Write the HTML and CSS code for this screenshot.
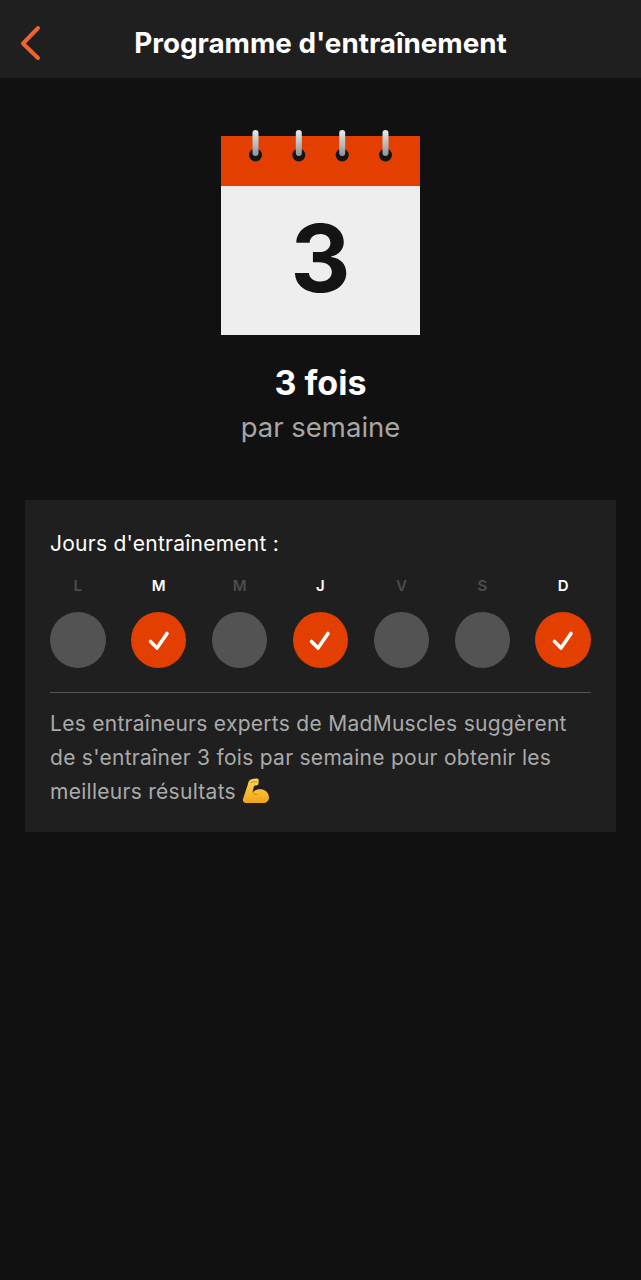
FILE: index.html
```html
<!DOCTYPE html>
<html lang="fr">
<head>
    <meta charset="UTF-8">
    <meta name="viewport" content="width=device-width, initial-scale=1.0">
    <title>Programme d'entraînement</title>
    <link rel="stylesheet" href="styles.css">
</head>
<body>
    <header class="topbar">
        <svg class="back" width="24" height="36" viewBox="0 0 24 36">
            <path d="M19 3 L4 18.5 L19 33" fill="none" stroke="#f2622e" stroke-width="4" stroke-linecap="round" stroke-linejoin="round"/>
        </svg>
        <h1>Programme d'entraînement</h1>
    </header>

    <section class="summary">
        <div class="calendar">
            <svg class="rings" width="199" height="36" viewBox="0 0 199 36">
                <defs>
                    <linearGradient id="metal" x1="0" y1="0" x2="0" y2="1">
                        <stop offset="0" stop-color="#e8ecec"/>
                        <stop offset="1" stop-color="#8f9294"/>
                    </linearGradient>
                </defs>
                <g id="ring">
                    <circle cx="34.5" cy="25" r="6.5" fill="#141414"/>
                    <rect x="31.5" y="0" width="6" height="26" rx="3" fill="url(#metal)"/>
                </g>
                <use href="#ring" x="43.3"/>
                <use href="#ring" x="86.7"/>
                <use href="#ring" x="130"/>
            </svg>
            <div class="cal-top"></div>
            <div class="cal-body">3</div>
        </div>
        <div class="times">3 fois</div>
        <div class="per-week">par semaine</div>
    </section>

    <section class="card">
        <h2>Jours d'entraînement :</h2>
        <div class="days">
            <div class="day"><span class="letter">L</span><span class="dot"></span></div>
            <div class="day on"><span class="letter">M</span><span class="dot"><svg width="24" height="24" viewBox="0 0 24 24"><path d="M3.5 13.5 L10 20 L20 5.5" fill="none" stroke="#fff" stroke-width="3.6" stroke-linecap="round" stroke-linejoin="round"/></svg></span></div>
            <div class="day"><span class="letter">M</span><span class="dot"></span></div>
            <div class="day on"><span class="letter">J</span><span class="dot"><svg width="24" height="24" viewBox="0 0 24 24"><path d="M3.5 13.5 L10 20 L20 5.5" fill="none" stroke="#fff" stroke-width="3.6" stroke-linecap="round" stroke-linejoin="round"/></svg></span></div>
            <div class="day"><span class="letter">V</span><span class="dot"></span></div>
            <div class="day"><span class="letter">S</span><span class="dot"></span></div>
            <div class="day on"><span class="letter">D</span><span class="dot"><svg width="24" height="24" viewBox="0 0 24 24"><path d="M3.5 13.5 L10 20 L20 5.5" fill="none" stroke="#fff" stroke-width="3.6" stroke-linecap="round" stroke-linejoin="round"/></svg></span></div>
        </div>
        <p class="note">Les entraîneurs experts de MadMuscles suggèrent de s'entraîner 3 fois par semaine pour obtenir les meilleurs résultats
            <svg class="muscle" width="28" height="28" viewBox="0 0 28 28">
                <defs>
                    <linearGradient id="skin" x1="0" y1="0" x2="0" y2="1">
                        <stop offset="0" stop-color="#ffd65a"/>
                        <stop offset="1" stop-color="#f2a416"/>
                    </linearGradient>
                </defs>
                <path d="M4 26 C1.5 26 0.5 24 1 22 L6 7 C6.3 4 8 2.5 10.5 2 L15 1.5 C16.5 1.5 17 3 16.5 4.5 L16.5 6.5 C16.5 8 15 8.5 13.5 8.5 L12 9 L10.5 15.5 C13 12.5 17 11.5 20.5 12.5 C24.5 13.5 27 17 27 20.5 C27 24 24.5 26 21 26 Z" fill="url(#skin)"/>
                <path d="M9 5.5 C11 4.5 13 4.5 15 5 M10.5 15.5 C12 17 13.5 17.5 15 17.5" fill="none" stroke="#c98a10" stroke-width="1" stroke-linecap="round"/>
            </svg>
        </p>
    </section>
</body>
</html>
```

FILE: styles.css
```css
body {
    margin: 0;
    min-height: 1280px;
    background-color: #111111;
    font-family: Inter, "Liberation Sans", sans-serif;
    color: #fff;
}
.topbar {
    position: relative;
    height: 78px;
    box-sizing: border-box;
    padding-top: 9px;
    display: flex;
    align-items: center;
    justify-content: center;
    background-color: #1f1f1f;
}
.back {
    position: absolute;
    left: 19px;
    top: 25px;
}
h1 {
    margin: 0;
    font-size: 27.8px;
    font-weight: 700;
    line-height: 1;
}
.summary {
    display: flex;
    flex-direction: column;
    align-items: center;
    padding-top: 58px;
}
.calendar {
    position: relative;
    width: 199px;
}
.rings {
    position: absolute;
    left: 0;
    top: -6px;
}
.cal-top {
    height: 50px;
    background-color: #e33f00;
}
.cal-body {
    height: 145px;
    padding-bottom: 4px;
    display: flex;
    align-items: center;
    justify-content: center;
    background-color: #eeeeee;
    color: #141414;
    font-size: 93px;
    font-weight: 700;
    line-height: 1;
}
.times {
    margin-top: 28px;
    font-size: 34px;
    font-weight: 700;
    line-height: 40px;
}
.per-week {
    margin-top: 7px;
    font-size: 27.5px;
    line-height: 34px;
    color: #a6a6a6;
}
.card {
    margin: 56px 25px 0;
    padding: 31px 25px 23px;
    background-color: #1f1f1f;
}
h2 {
    margin: 0;
    font-size: 21px;
    font-weight: 400;
    line-height: 26px;
    letter-spacing: 0.25px;
}
.days {
    display: flex;
    justify-content: space-between;
    margin-top: 20px;
    padding-bottom: 24px;
    border-bottom: 1px solid #555;
}
.day {
    display: flex;
    flex-direction: column;
    align-items: center;
    gap: 17px;
}
.letter {
    font-size: 15px;
    font-weight: 600;
    line-height: 18px;
    color: #4d4d4d;
}
.dot {
    width: 55.5px;
    height: 56px;
    display: flex;
    align-items: center;
    justify-content: center;
    border-radius: 50%;
    background-color: #535353;
}
.on .letter {
    color: #fff;
}
.on .dot {
    background-color: #e33f00;
}
.note {
    margin: 14px 0 0;
    font-size: 21px;
    line-height: 34px;
    letter-spacing: 0.28px;
    color: #aaaaaa;
}
.muscle {
    vertical-align: -6px;
}
```
